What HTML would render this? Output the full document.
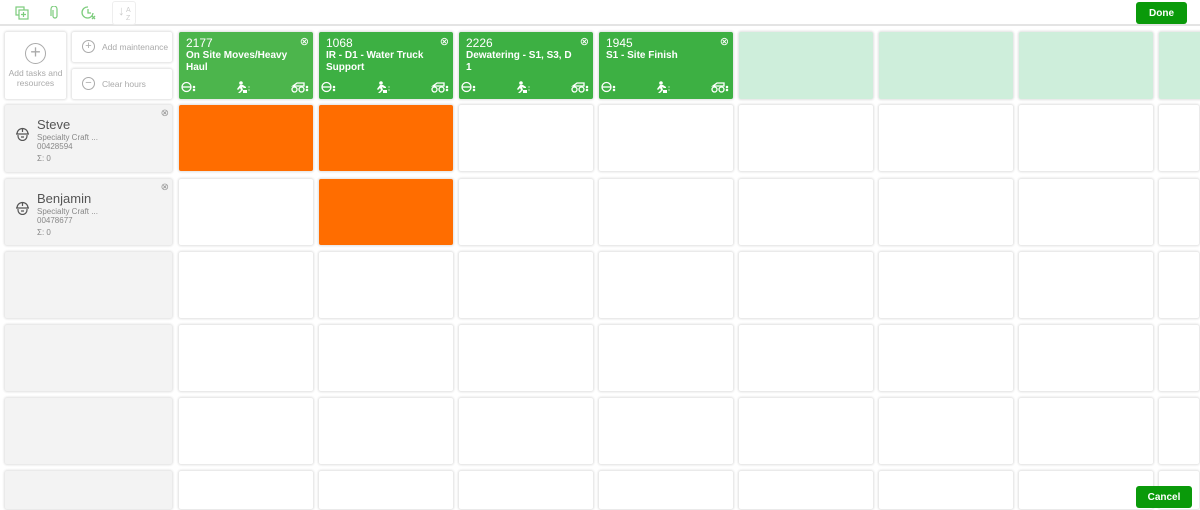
<!DOCTYPE html>
<html><head><style>
*{box-sizing:border-box;margin:0;padding:0}
html,body{width:1200px;height:510px;overflow:hidden}
body{background:#fff;font-family:"Liberation Sans",Arial,sans-serif;position:relative}
.top{position:absolute;left:0;top:0;width:1200px;height:26px;border-bottom:2px solid #e4e4e4}
.c{position:absolute;border-radius:2px;box-shadow:0 0 2px 1px rgba(0,0,0,.13)}
.w{background:#fff}
.g{background:#f3f3f3}
.o{background:#ff6d00}
.lg{background:#ceeedb}
.t{background:#3db043;color:#fff;padding:5px 7px}
.t .n{font-size:12px;line-height:13px}
.t .d{font-size:10px;font-weight:bold;line-height:11.5px;width:118px}
.t .x{position:absolute;right:4px;top:3px;font-size:11px}
.t svg{position:absolute;bottom:6px}
.btn{position:absolute;background:#0a9a0a;color:#fff;font-size:10px;font-weight:bold;border-radius:3px;text-align:center;line-height:23px}
.p .nm{position:absolute;left:32px;top:12px;font-size:13px;color:#555}
.p .s{position:absolute;left:32px;font-size:8px;color:#888;line-height:9px}
.small{font-size:8.5px;color:#aaa;white-space:nowrap}
</style></head><body>
<div class="top">
<svg style="position:absolute;left:15px;top:6px" width="14" height="14" viewBox="0 0 14 14" fill="none" stroke="#7ccc7c" stroke-width="1.2"><rect x="1" y="1" width="8" height="8"/><rect x="4" y="4" width="9" height="9" fill="#fff"/><path d="M8.5 6v5M6 8.5h5"/></svg>
<svg style="position:absolute;left:50px;top:6px" width="10" height="14" viewBox="0 0 10 14" fill="none" stroke="#7ccc7c" stroke-width="1.2"><path d="M3 4v6a2 2 0 0 0 4 0V3a3 3 0 0 0-6 0v7"/></svg>
<svg style="position:absolute;left:81px;top:5px" width="15" height="15" viewBox="0 0 15 15" fill="none" stroke="#7ccc7c" stroke-width="1.3"><path d="M12 8A5.5 5.5 0 1 1 7 2"/><path d="M7 4v4h3"/><path d="M11 11l3 3M14 11l-3 3"/></svg>
<div style="position:absolute;left:112px;top:1px;width:24px;height:24px;border:1px solid #eee;border-radius:3px;color:#ccc;font-size:7px;line-height:7px"><span style="position:absolute;left:5px;top:5px;font-size:13px">↓</span><span style="position:absolute;left:13px;top:5px">A</span><span style="position:absolute;left:13px;top:13px">Z</span></div>
</div>
<div class="btn" style="left:1136px;top:2px;width:51px;height:22px">Done</div>

<div class="c w" style="left:5px;top:32px;width:61px;height:67px;text-align:center">
<div style="width:21px;height:21px;border:1.5px solid #aaa;border-radius:50%;margin:11px auto 4px;color:#aaa;font-size:18px;line-height:17px">+</div>
<div style="font-size:8.5px;color:#aaa;line-height:10px">Add tasks and resources</div></div>
<div class="c w" style="left:72px;top:32px;width:100px;height:30px"><span style="position:absolute;left:10px;top:8px;width:13px;height:13px;border:1px solid #aaa;border-radius:50%;color:#aaa;font-size:11px;line-height:11px;text-align:center">+</span><span class="small" style="position:absolute;left:30px;top:10px">Add maintenance</span></div>
<div class="c w" style="left:72px;top:69px;width:100px;height:30px"><span style="position:absolute;left:10px;top:8px;width:13px;height:13px;border:1px solid #aaa;border-radius:50%;color:#aaa;font-size:11px;line-height:10px;text-align:center">−</span><span class="small" style="position:absolute;left:30px;top:10px">Clear hours</span></div>

<div id="tasks"></div>
<div id="grid"></div>
<script>
var icons='<svg style="left:2px" width="16" height="12" viewBox="0 0 16 12" fill="none" stroke="#fff" stroke-width="1.3"><circle cx="5.5" cy="6" r="4.5"/><path d="M1 6h9"/><circle cx="13" cy="9" r=".6" fill="#fff"/><circle cx="13" cy="6" r=".6" fill="#fff"/></svg>'+
'<svg style="left:56px" width="16" height="12" viewBox="0 0 16 12" fill="#fff"><circle cx="6" cy="2" r="1.8"/><path d="M5 4l-3 4 1 1 2-2 1 2-3 3h2l3-3-1-3 2 1h2v-1l-3-2z"/><rect x="8" y="9" width="4" height="3"/><circle cx="14" cy="9" r=".6"/><circle cx="14" cy="6" r=".6"/></svg>'+
'<svg style="right:4px" width="18" height="12" viewBox="0 0 18 12" fill="none" stroke="#fff" stroke-width="1.3"><circle cx="3.5" cy="8.5" r="2.5"/><circle cx="10.5" cy="8.5" r="2.5"/><path d="M2 5h11V2H6z"/><circle cx="16" cy="9" r=".6" fill="#fff"/><circle cx="16" cy="6" r=".6" fill="#fff"/></svg>';
var T=[['2177','On Site Moves/Heavy Haul','#4cb54c'],['1068','IR - D1 - Water Truck Support','#3db043'],['2226','Dewatering - S1, S3, D<br>1','#3db043'],['1945','S1 - Site Finish','#3db043']];
var s='';
for(var i=0;i<4;i++)s+='<div class="c t" style="left:'+(179+140*i)+'px;top:32px;width:134px;height:67px;background:'+T[i][2]+'"><div class="n">'+T[i][0]+'</div><div class="d">'+T[i][1]+'</div><span class="x">⊗</span>'+icons+'</div>';
for(var i=4;i<8;i++)s+='<div class="c lg" style="left:'+(179+140*i)+'px;top:32px;width:134px;height:67px"></div>';
document.getElementById('tasks').innerHTML=s;
var h='';var tops=[105,179,252,325,398,471];
for(var r=0;r<6;r++){var y=tops[r];var hh=r==5?38:66;
 if(r>=2)h+='<div class="c g" style="left:5px;top:'+y+'px;width:167px;height:'+hh+'px"></div>';
 for(var c=0;c<8;c++){var x=179+140*c;var cl='w';var ww=c==7?40:134;
  if((r==0&&c<2)||(r==1&&c==1))cl='o';
  h+='<div class="c '+cl+'" style="left:'+x+'px;top:'+y+'px;width:'+ww+'px;height:'+hh+'px"></div>';}}
document.getElementById('grid').innerHTML=h;
</script>
<div class="c g p" style="left:5px;top:105px;width:167px;height:67px">
<svg style="position:absolute;left:10px;top:21px" width="15" height="15" viewBox="0 0 15 15" fill="none" stroke="#555" stroke-width="1.2"><path d="M2 8a5.5 5.5 0 0 1 11 0M1 8h13M3 9v1a4.5 4.5 0 0 0 9 0V9M6 11h3M7.5 3v3"/></svg>
<span style="position:absolute;right:3px;top:3px;font-size:10px;color:#999">⊗</span>
<div class="nm">Steve</div><div class="s" style="top:28px">Specialty Craft ...</div><div class="s" style="top:37px">00428594</div><div class="s" style="top:49px">Σ: 0</div></div>
<div class="c g p" style="left:5px;top:179px;width:167px;height:66px">
<svg style="position:absolute;left:10px;top:21px" width="15" height="15" viewBox="0 0 15 15" fill="none" stroke="#555" stroke-width="1.2"><path d="M2 8a5.5 5.5 0 0 1 11 0M1 8h13M3 9v1a4.5 4.5 0 0 0 9 0V9M6 11h3M7.5 3v3"/></svg>
<span style="position:absolute;right:3px;top:3px;font-size:10px;color:#999">⊗</span>
<div class="nm">Benjamin</div><div class="s" style="top:28px">Specialty Craft ...</div><div class="s" style="top:37px">00478677</div><div class="s" style="top:49px">Σ: 0</div></div>
<div class="btn" style="left:1136px;top:486px;width:56px;height:22px">Cancel</div>
</body></html>
